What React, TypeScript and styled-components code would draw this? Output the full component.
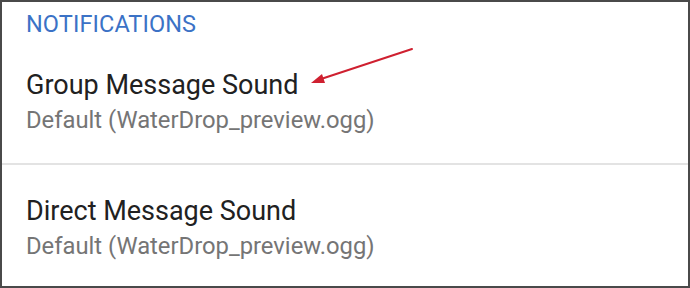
import React from "react";
import styled, { createGlobalStyle } from "styled-components";

const Global = createGlobalStyle`
  html, body { margin: 0; padding: 0; background: #ffffff; }
  * { box-sizing: border-box; }
`;

const Frame = styled.div`
  position: relative;
  width: 690px;
  height: 288px;
  border: 2px solid #4a4a4a;
  background: #ffffff;
  font-family: Roboto, "Noto Sans", Arial, sans-serif;
  display: flex;
  flex-direction: column;
  overflow: hidden;
`;

const SectionHeader = styled.div`
  padding: 7px 0 0 24px;
  height: 45px;
  font-size: 23.5px;
  line-height: 30px;
  color: #3b72c6;
  letter-spacing: 0.1px;
  flex-shrink: 0;
`;

const Item = styled.div<{ $top: number; $height: number }>`
  display: flex;
  flex-direction: column;
  padding: ${(p) => p.$top}px 0 0 24px;
  height: ${(p) => p.$height}px;
  flex-shrink: 0;
`;

const Title = styled.div`
  font-size: 27px;
  line-height: 34px;
  color: #212121;
`;

const Summary = styled.div`
  font-size: 23.8px;
  line-height: 36px;
  color: #757575;
`;

const Divider = styled.div`
  height: 2px;
  background: #e3e3e3;
  flex-shrink: 0;
`;

const ArrowSvg = styled.svg`
  position: absolute;
  left: 300px;
  top: 38px;
  overflow: visible;
`;

export default function App() {
  return (
    <>
      <Global />
      <Frame>
        <SectionHeader>NOTIFICATIONS</SectionHeader>
        <Item $top={21} $height={116}>
          <Title>Group Message Sound</Title>
          <Summary>Default (WaterDrop_preview.ogg)</Summary>
        </Item>
        <Divider />
        <Item $top={29} $height={124}>
          <Title>Direct Message Sound</Title>
          <Summary>Default (WaterDrop_preview.ogg)</Summary>
        </Item>
        <ArrowSvg width="120" height="50" viewBox="0 0 120 50">
          <line x1="110" y1="9" x2="16" y2="40" stroke="#cf2030" strokeWidth="2" strokeLinecap="round" />
          <polygon points="9,43 20,34 23,43" fill="#cf2030" />
        </ArrowSvg>
      </Frame>
    </>
  );
}
